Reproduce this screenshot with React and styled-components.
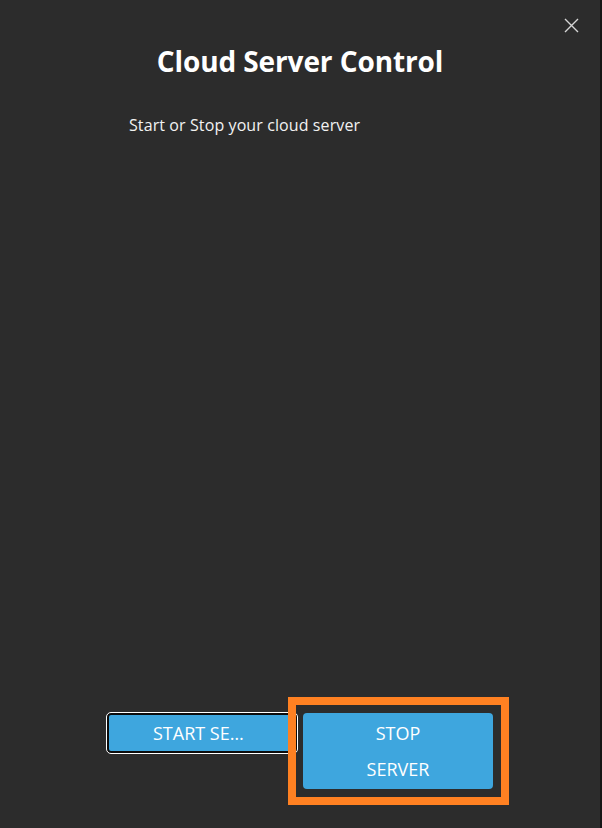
import styled, { createGlobalStyle } from "styled-components"

const Global = createGlobalStyle`
  html, body {
    margin: 0;
    padding: 0;
    background: #2c2c2c;
  }
  body {
    font-family: "Open Sans", "Noto Sans", sans-serif;
  }
`

const Dialog = styled.div`
  position: relative;
  box-sizing: border-box;
  width: 602px;
  height: 828px;
  background: #2c2c2c;
  border-right: 2px solid #161616;
  display: flex;
  flex-direction: column;
  color: #fff;
`

const CloseButton = styled.button`
  position: absolute;
  top: 16px;
  right: 20px;
  width: 18px;
  height: 18px;
  padding: 0;
  border: none;
  background: none;
  display: flex;
  align-items: center;
  justify-content: center;
  cursor: pointer;
`

const Title = styled.h1`
  margin: 42px 0 0;
  text-align: center;
  font-size: 28px;
  font-weight: 700;
  line-height: 38px;
  letter-spacing: -0.1px;
`

const Subtitle = styled.p`
  margin: 34px 0 0 129px;
  font-size: 16px;
  line-height: 22px;
  color: #f2f2f2;
  letter-spacing: 0.1px;
`

const Spacer = styled.div`
  flex: 1;
`

const ButtonRow = styled.div`
  display: flex;
  justify-content: center;
  align-items: flex-start;
  gap: 6px;
  padding: 0 0 39px;
`

const ActionButton = styled.button`
  position: relative;
  box-sizing: border-box;
  width: 190px;
  padding: 0 44px;
  border: 2px solid ${p => (p.$focused ? "#0c0c0c" : "transparent")};
  border-radius: 4px;
  background: #3ea6de;
  color: #fff;
  font-family: "Open Sans", "Noto Sans", sans-serif;
  font-size: 18px;
  line-height: 36px;
  text-align: center;
  white-space: ${p => (p.$wrap ? "normal" : "nowrap")};
  overflow: hidden;
  text-overflow: ellipsis;
  outline: ${p => (p.$focused ? "1px solid #ffffff" : "none")};
  outline-offset: 0;
`

const Highlight = styled.div`
  position: absolute;
  inset: -16px -16px -16px -15px;
  border: 8px solid #ff8122;
  pointer-events: none;
`

const StopWrap = styled.div`
  position: relative;
  display: flex;
`

export default function App() {
  return (
    <>
      <Global />
      <Dialog>
        <CloseButton aria-label="Close">
          <svg width="15" height="15" viewBox="0 0 15 15">
            <path d="M1 1 L14 14 M14 1 L1 14" stroke="#d6d6d6" strokeWidth="1.4" />
          </svg>
        </CloseButton>
        <Title>Cloud Server Control</Title>
        <Subtitle>Start or Stop your cloud server</Subtitle>
        <Spacer />
        <ButtonRow>
          <ActionButton $focused>START SERVER</ActionButton>
          <StopWrap>
            <ActionButton $wrap>STOP SERVER</ActionButton>
            <Highlight />
          </StopWrap>
        </ButtonRow>
      </Dialog>
    </>
  )
}
